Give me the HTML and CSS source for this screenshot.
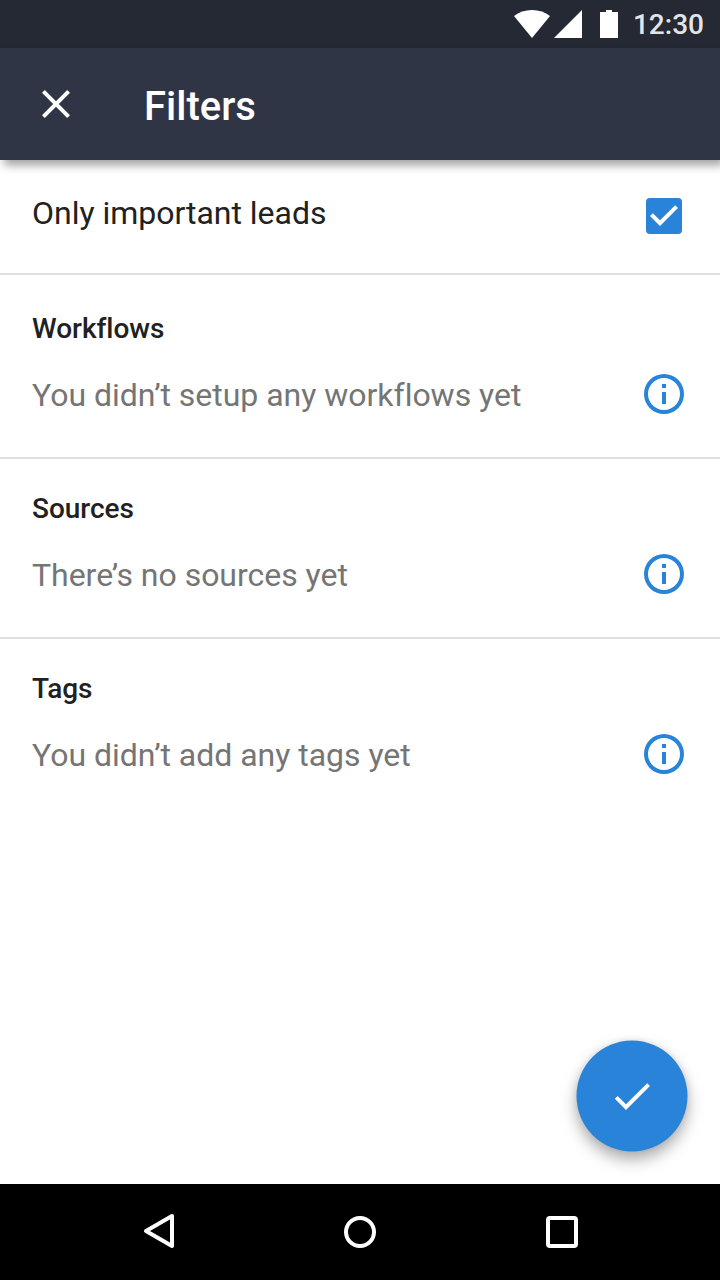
FILE: index.html
```html
<!DOCTYPE html>
<html lang="en">
<head>
<meta charset="utf-8">
<title>Filters</title>
<link rel="stylesheet" href="styles.css">
</head>
<body>
<div class="screen">
  <div class="status-bar">
    <svg class="status-icons" width="108" height="48" viewBox="0 0 108 48" fill="#fff">
      <path d="M22 38L4 16C9 12 15 10 22 10s13 2 18 6z"/>
      <path d="M72 10v28H44z"/>
      <path d="M90 12h6v-2h6v2h6v26H90z"/>
    </svg>
    <span class="clock">12:30</span>
  </div>
  <header class="app-bar">
    <svg class="icon" viewBox="0 0 24 24" fill="#fff"><path d="M19 6.41L17.59 5 12 10.59 6.41 5 5 6.41 10.59 12 5 17.59 6.41 19 12 13.41 17.59 19 19 17.59 13.41 12z"/></svg>
    <h1 class="title">Filters</h1>
  </header>
  <main class="content">
    <section class="option">
      <span class="label">Only important leads</span>
      <svg class="icon accent checkbox" viewBox="0 0 24 24"><rect x="3" y="3" width="18" height="18" rx="2"/><path fill="#fff" d="M10 17l-5-5 1.41-1.41L10 14.17l7.59-7.59L19 8z"/></svg>
    </section>
    <section class="group group-first">
      <h2 class="heading">Workflows</h2>
      <div class="row">
        <span class="empty">You didn’t setup any workflows yet</span>
        <svg class="icon accent" viewBox="0 0 24 24"><path d="M11 17h2v-6h-2zM11 9h2V7h-2zM12 2a10 10 0 1 0 0 20 10 10 0 0 0 0-20zm0 18a8 8 0 1 1 0-16 8 8 0 0 1 0 16z"/></svg>
      </div>
    </section>
    <section class="group">
      <h2 class="heading">Sources</h2>
      <div class="row">
        <span class="empty">There’s no sources yet</span>
        <svg class="icon accent" viewBox="0 0 24 24"><path d="M11 17h2v-6h-2zM11 9h2V7h-2zM12 2a10 10 0 1 0 0 20 10 10 0 0 0 0-20zm0 18a8 8 0 1 1 0-16 8 8 0 0 1 0 16z"/></svg>
      </div>
    </section>
    <section class="group">
      <h2 class="heading">Tags</h2>
      <div class="row">
        <span class="empty">You didn’t add any tags yet</span>
        <svg class="icon accent" viewBox="0 0 24 24"><path d="M11 17h2v-6h-2zM11 9h2V7h-2zM12 2a10 10 0 1 0 0 20 10 10 0 0 0 0-20zm0 18a8 8 0 1 1 0-16 8 8 0 0 1 0 16z"/></svg>
      </div>
    </section>
    <div class="fab">
      <svg class="fab-face" viewBox="0 0 112 112">
        <circle class="accent" cx="56" cy="56" r="55.5"/>
        <path fill="#fff" transform="translate(32 32) scale(2)" d="M9 16.17L4.83 12l-1.42 1.41L9 19 21 7l-1.41-1.41z"/>
      </svg>
    </div>
  </main>
  <nav class="nav-bar">
    <svg class="nav-icon" viewBox="0 0 48 48"><path d="M10 23l26-15v30z" transform="translate(2)"/></svg>
    <svg class="nav-icon" viewBox="0 0 48 48"><circle cx="24" cy="24" r="14"/></svg>
    <svg class="nav-icon" viewBox="0 0 48 48"><rect x="10" y="10" width="28" height="28" rx="2"/></svg>
  </nav>
</div>
</body>
</html>
```
FILE: styles.css
```css
* {
  box-sizing: border-box;
}

body {
  margin: 0;
  font-family: Roboto, "Liberation Sans", sans-serif;
  font-variant-ligatures: none;
}

.screen {
  display: flex;
  flex-direction: column;
  width: 720px;
  height: 1280px;
  overflow: hidden;
  background: #fff;
}

.status-bar {
  display: flex;
  justify-content: flex-end;
  align-items: center;
  height: 48px;
  padding-right: 16px;
  background: #252934;
}

.status-icons {
  margin-right: 15px;
}

.clock {
  padding-top: 2px;
  color: rgba(255, 255, 255, 0.9);
  font-size: 28px;
  font-weight: 500;
  line-height: 46px;
}

.app-bar {
  display: flex;
  align-items: center;
  gap: 64px;
  height: 112px;
  padding: 0 32px;
  background: #303546;
  box-shadow: 4px 5px 9px rgba(0, 0, 0, 0.38);
  z-index: 1;
}

.icon {
  display: block;
  flex: none;
  width: 48px;
  height: 48px;
}

.accent {
  fill: #2983d8;
}

.title {
  margin: 0;
  padding-top: 6px;
  color: #fff;
  font-size: 40px;
  font-weight: 500;
  line-height: 48px;
}

.content {
  position: relative;
  flex: 1;
}

.option {
  display: flex;
  justify-content: space-between;
  align-items: flex-start;
  height: 115px;
  padding: 32px 32px 0;
  border-bottom: 2px solid #dedede;
}

.label,
.empty {
  font-size: 32px;
  line-height: 42px;
  letter-spacing: -0.025px;
}

.label {
  color: #212121;
}

.empty {
  padding-top: 2px;
  color: #757575;
}

.group {
  height: 180px;
  padding: 30px 32px 0;
  border-bottom: 2px solid #dedede;
}

.group-first {
  height: 184px;
  padding-top: 34px;
}

.group:nth-of-type(4) {
  border-bottom: 0;
}

.heading {
  margin: 0 0 21px;
  color: #212121;
  font-size: 28px;
  font-weight: 500;
  line-height: 40px;
  letter-spacing: -0.04px;
}

.row {
  display: flex;
  justify-content: space-between;
  align-items: center;
  height: 48px;
}

.fab {
  position: absolute;
  right: 32px;
  bottom: 32px;
  width: 112px;
  height: 112px;
}

.fab-face {
  display: block;
  width: 112px;
  height: 112px;
  overflow: visible;
  filter: drop-shadow(0 8px 8px rgba(0, 0, 0, 0.3)) drop-shadow(0 0 3px rgba(0, 0, 0, 0.1));
}

.nav-bar {
  display: flex;
  justify-content: space-between;
  align-items: center;
  height: 96px;
  padding: 0 134px;
  background: #000;
}

.nav-icon {
  width: 48px;
  height: 48px;
  fill: none;
  stroke: #fff;
  stroke-width: 4;
  stroke-linejoin: round;
}
```
